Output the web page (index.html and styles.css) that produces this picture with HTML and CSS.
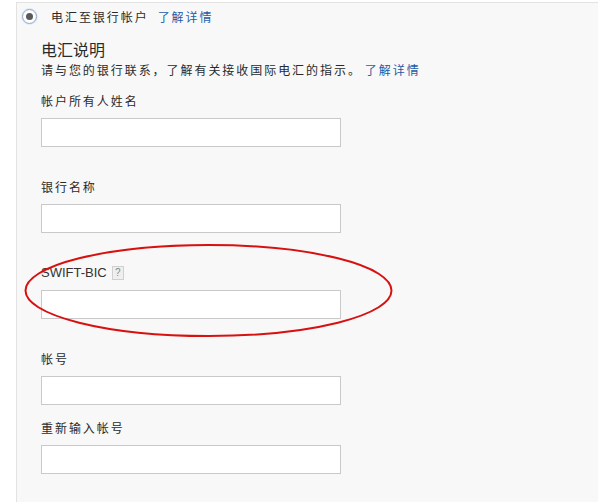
FILE: index.html
```html
<!DOCTYPE html>
<html lang="zh-CN">
<head>
<meta charset="utf-8">
<title>电汇至银行帐户</title>
<link rel="stylesheet" href="styles.css">
</head>
<body>
<div class="page">
  <div class="panel">
    <div class="option">
      <span class="radio"><span class="dot"></span></span>
      <span class="option-text">电汇至银行帐户</span>
      <a class="link" href="#">了解详情</a>
    </div>
    <div class="section">
      <div class="title">电汇说明</div>
      <div class="desc">请与您的银行联系，了解有关接收国际电汇的指示。<a class="link" href="#">了解详情</a></div>
      <div class="field">
        <div class="label">帐户所有人姓名</div>
        <div class="input"></div>
      </div>
      <div class="field">
        <div class="label">银行名称</div>
        <div class="input"></div>
      </div>
      <div class="field">
        <div class="label label-latin">SWIFT-BIC <span class="help">?</span></div>
        <div class="input"></div>
      </div>
      <div class="field">
        <div class="label">帐号</div>
        <div class="input"></div>
      </div>
      <div class="field field-last">
        <div class="label">重新输入帐号</div>
        <div class="input"></div>
      </div>
    </div>
  </div>
  <svg class="mark" width="598" height="502" viewBox="0 0 598 502">
    <ellipse cx="208.5" cy="290.5" rx="183" ry="45.5" fill="none" stroke="#d81010" stroke-width="2"/>
  </svg>
</div>
</body>
</html>
```

FILE: styles.css
```css
html, body {
  margin: 0;
  padding: 0;
  background: #ffffff;
}
body {
  font-family: "Noto Sans CJK SC", "Liberation Sans", sans-serif;
  color: #2a2a2a;
  font-size: 12px;
}
.page {
  position: relative;
  width: 598px;
  height: 502px;
  overflow: hidden;
  padding-top: 2px;
  padding-left: 16px;
  box-sizing: border-box;
}
.panel {
  background: #f8f8f8;
  border-top: 1px solid #e2e2e2;
  border-left: 1px solid #e2e2e2;
  height: 100%;
  box-sizing: border-box;
}
.option {
  display: flex;
  align-items: center;
  height: 26px;
  padding-left: 5px;
}
.radio {
  width: 13px;
  height: 13px;
  border: 1px solid #8ea8cc;
  border-radius: 50%;
  background: radial-gradient(circle, #ffffff 55%, #e6edf7 100%);
  display: flex;
  align-items: center;
  justify-content: center;
  margin-right: 14px;
  box-shadow: 0 0 0 1px #e3eaf4;
}
.dot {
  width: 7px;
  height: 7px;
  border-radius: 50%;
  background: #5a5a5a;
}
.option-text, .desc, .label {
  letter-spacing: 1.95px;
}
.link {
  color: #1f5ba6;
  text-decoration: none;
  letter-spacing: 1.95px;
}
.option .link {
  margin-left: 9px;
}
.desc .link {
  margin-left: 3px;
}
.section {
  padding-left: 24px;
  padding-top: 10px;
  display: flex;
  flex-direction: column;
}
.title {
  font-size: 16px;
  line-height: 20px;
  color: #2a2a2a;
}
.desc {
  line-height: 18px;
  margin-top: 2px;
}
.field {
  display: flex;
  flex-direction: column;
  margin-top: 13px;
}
.field + .field {
  margin-top: 31px;
}
.field.field-last {
  margin-top: 14px;
}
.label {
  line-height: 18px;
  height: 18px;
  display: flex;
  align-items: center;
}
.label-latin {
  font-family: "Liberation Sans", Arial, sans-serif;
  font-size: 13px;
  letter-spacing: 0;
  color: #333;
}
.help {
  display: inline-flex;
  align-items: center;
  justify-content: center;
  width: 10px;
  height: 12px;
  margin-left: 5px;
  border: 1px solid #d0d0d0;
  background: #efefef;
  color: #888;
  font-size: 10px;
  line-height: 12px;
}
.input {
  margin-top: 8px;
  width: 300px;
  height: 29px;
  box-sizing: border-box;
  background: #fff;
  border: 1px solid #c9c9c9;
}
.mark {
  position: absolute;
  left: 0;
  top: 0;
  pointer-events: none;
}
```
